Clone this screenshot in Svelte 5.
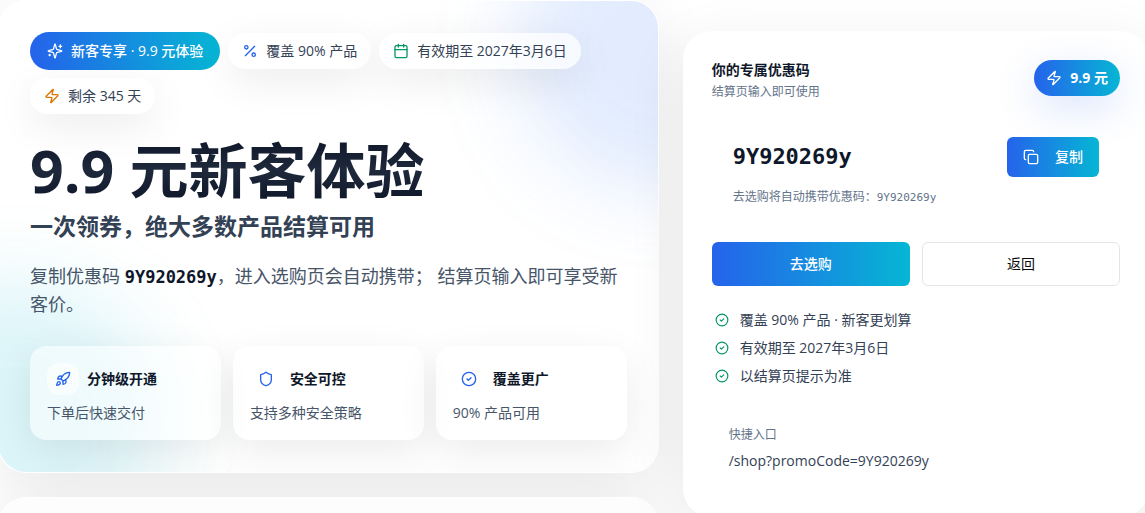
<script>
  const code = "9Y920269y";
  const expires = "2027年3月6日";

  const icons = {
    sparkles: [
      "M9.9 15.5A2 2 0 0 0 8.5 14.1l-6.1-1.6a.5.5 0 0 1 0-1L8.5 9.9A2 2 0 0 0 9.9 8.5l1.6-6.1a.5.5 0 0 1 1 0L14.1 8.5a2 2 0 0 0 1.4 1.4l6.1 1.6a.5.5 0 0 1 0 1l-6.1 1.6a2 2 0 0 0-1.4 1.4l-1.6 6.1a.5.5 0 0 1-1 0z",
      "M20 3v4M22 5h-4M4 17v2M5 18H3",
    ],
    percent: [
      "M19 5 5 19",
      "M9 6.5a2.5 2.5 0 1 1-5 0 2.5 2.5 0 0 1 5 0Z",
      "M20 17.5a2.5 2.5 0 1 1-5 0 2.5 2.5 0 0 1 5 0Z",
    ],
    calendar: [
      "M8 2v4M16 2v4M3 10h18",
      "M5 4h14a2 2 0 0 1 2 2v14a2 2 0 0 1-2 2H5a2 2 0 0 1-2-2V6a2 2 0 0 1 2-2Z",
    ],
    zap: [
      "M4 14a1 1 0 0 1-.78-1.63l9.9-10.2a.5.5 0 0 1 .86.46l-1.92 6.02A1 1 0 0 0 13 10h7a1 1 0 0 1 .78 1.63l-9.9 10.2a.5.5 0 0 1-.86-.46l1.92-6.02A1 1 0 0 0 11 14z",
    ],
    rocket: [
      "M4.5 16.5c-1.5 1.26-2 5-2 5s3.74-.5 5-2c.71-.84.7-2.13-.09-2.91a2.18 2.18 0 0 0-2.91-.09z",
      "m12 15-3-3a22 22 0 0 1 2-3.95A12.88 12.88 0 0 1 22 2c0 2.72-.78 7.5-6 11a22.35 22.35 0 0 1-4 2z",
      "M9 12H4s.55-3.03 2-4c1.62-1.08 5 0 5 0",
      "M12 15v5s3.03-.55 4-2c1.08-1.62 0-5 0-5",
    ],
    shield: [
      "M20 13c0 5-3.5 7.5-7.66 8.95a1 1 0 0 1-.67-.01C7.5 20.5 4 18 4 13V6a1 1 0 0 1 1-1c2 0 4.5-1.2 6.24-2.72a1.17 1.17 0 0 1 1.52 0C14.51 3.81 17 5 19 5a1 1 0 0 1 1 1z",
    ],
    check: ["M22 12a10 10 0 1 1-20 0 10 10 0 0 1 20 0Z", "m9 12 2 2 4-4"],
    copy: [
      "M10 8h10a2 2 0 0 1 2 2v10a2 2 0 0 1-2 2H10a2 2 0 0 1-2-2V10a2 2 0 0 1 2-2Z",
      "M4 16c-1.1 0-2-.9-2-2V4c0-1.1.9-2 2-2h10c1.1 0 2 .9 2 2",
    ],
  };

  const tags = [
    { icon: "percent", tone: "blue", text: "覆盖 90% 产品" },
    { icon: "calendar", tone: "green", text: `有效期至 ${expires}` },
    { icon: "zap", tone: "amber", text: "剩余 345 天" },
  ];

  const features = [
    { icon: "rocket", title: "分钟级开通", text: "下单后快速交付" },
    { icon: "shield", title: "安全可控", text: "支持多种安全策略" },
    { icon: "check", title: "覆盖更广", text: "90% 产品可用" },
  ];

  const notes = [
    "覆盖 90% 产品 · 新客更划算",
    `有效期至 ${expires}`,
    "以结算页提示为准",
  ];

  const copyCode = () => {
    navigator.clipboard?.writeText(code);
  };

  const goBack = () => {
    history.back();
  };
</script>

{#snippet icon(name)}
  <svg class="icon" viewBox="0 0 24 24" aria-hidden="true">
    {#each icons[name] as d}
      <path {d} />
    {/each}
  </svg>
{/snippet}

<div class="page">
  <main>
    <div class="left">
      <section class="card hero">
        <div class="tags">
          <span class="tag primary">{@render icon("sparkles")}新客专享 · 9.9 元体验</span>
          {#each tags as tag}
            <span class="tag {tag.tone}">{@render icon(tag.icon)}{tag.text}</span>
          {/each}
        </div>

        <h1>9.9 元新客体验</h1>
        <h2>一次领券，绝大多数产品结算可用</h2>
        <p class="intro">
          复制优惠码 <b class="mono">{code}</b>，进入选购页会自动携带； 结算页输入即可享受新客价。
        </p>

        <div class="features">
          {#each features as feature}
            <div class="feature">
              <div class="feature-head">
                <span class="feature-icon">{@render icon(feature.icon)}</span>
                <h3>{feature.title}</h3>
              </div>
              <p>{feature.text}</p>
            </div>
          {/each}
        </div>
      </section>

      <section class="card more"></section>
    </div>

    <aside class="card coupon">
      <header>
        <div>
          <h3>你的专属优惠码</h3>
          <p class="small">结算页输入即可使用</p>
        </div>
        <span class="price">{@render icon("zap")}9.9 元</span>
      </header>

      <div class="code-box">
        <div class="code-row">
          <span class="code mono">{code}</span>
          <button class="copy" on:click={copyCode}>{@render icon("copy")}复制</button>
        </div>
        <p class="small">去选购将自动携带优惠码：<span class="mono hint">{code}</span></p>
      </div>

      <div class="actions">
        <a class="buy" href="/shop?promoCode={code}">去选购</a>
        <button class="back" on:click={goBack}>返回</button>
      </div>

      <ul>
        {#each notes as note}
          <li><span class="note-icon">{@render icon("check")}</span>{note}</li>
        {/each}
      </ul>

      <div class="quick">
        <p class="small">快捷入口</p>
        <a href="/shop?promoCode={code}">/shop?promoCode={code}</a>
      </div>
    </aside>
  </main>
</div>

<style>
  :global(body) {
    background: #fff;
  }

  .page {
    height: 100vh;
    overflow: hidden;
    color: #0f172a;
    font-family: "Open Sans", "Noto Sans CJK SC", sans-serif;
    font-size: 14px;
    line-height: 20px;
  }

  main {
    display: grid;
    grid-template-columns: 17fr 12fr;
    align-items: start;
    gap: 24px;
    margin: 0 -4px 0 -2px;
  }

  h1,
  h2,
  h3,
  p,
  ul {
    margin: 0;
    padding: 0;
  }

  h3 {
    font-size: 14px;
    font-weight: 700;
  }

  a {
    color: inherit;
    text-decoration: none;
  }

  button {
    border: 0;
    font: inherit;
    cursor: pointer;
  }

  .mono {
    font-family: "DejaVu Sans Mono", monospace;
    line-height: 1;
  }

  .icon {
    width: 16px;
    height: 16px;
    flex: none;
    fill: none;
    stroke: currentColor;
    stroke-width: 2;
    stroke-linecap: round;
    stroke-linejoin: round;
  }

  .card {
    position: relative;
    box-sizing: border-box;
    border: 1px solid rgba(255, 255, 255, 0.7);
    border-radius: 28px;
    background: rgba(255, 255, 255, 0.92);
    box-shadow: 0 16px 60px rgba(0, 0, 0, 0.09);
  }

  .left {
    display: grid;
    gap: 24px;
  }

  .hero {
    overflow: hidden;
    padding: 31px 31px 32px;
  }

  .hero::before,
  .hero::after {
    content: "";
    position: absolute;
    width: 288px;
    height: 288px;
    border-radius: 50%;
    filter: blur(40px);
  }

  .hero::before {
    top: -96px;
    right: -144px;
    background: rgba(59, 130, 246, 0.15);
  }

  .hero::after {
    bottom: -96px;
    left: -128px;
    background: rgba(6, 182, 212, 0.14);
  }

  .hero > * {
    position: relative;
    z-index: 1;
  }

  .more {
    height: 200px;
    background: #fdfdfd;
  }

  .tags {
    display: flex;
    flex-wrap: wrap;
    align-items: center;
    gap: 8px;
  }

  .tag {
    display: flex;
    align-items: center;
    gap: 8px;
    padding: 8px 14px;
    border-radius: 20px;
    background: rgba(255, 255, 255, 0.7);
    box-shadow: 0 12px 40px rgba(0, 0, 0, 0.08);
    color: #334155;
  }

  .tag.primary {
    padding: 9px 17px;
    background: linear-gradient(90deg, #2563eb, #06b6d4);
    box-shadow: none;
    color: #fff;
    font-weight: 500;
  }

  .blue .icon {
    color: #2563eb;
  }

  .green .icon {
    color: #059669;
  }

  .amber .icon {
    color: #d97706;
  }

  h1 {
    margin-top: 24px;
    background: linear-gradient(#0f172a, #1e293b 50%, #0f172a);
    background-clip: text;
    color: transparent;
    font-size: 59px;
    font-weight: 700;
    line-height: 64px;
  }

  h2 {
    margin-top: 8px;
    color: #334155;
    font-size: 23px;
    font-weight: 700;
    line-height: 32px;
  }

  .intro {
    margin-top: 20px;
    color: #475569;
    font-size: 18px;
    line-height: 28px;
  }

  .intro .mono {
    color: #0f172a;
    font-size: 17px;
  }

  .features {
    display: grid;
    grid-template-columns: repeat(3, 1fr);
    gap: 12px;
    margin-top: 28px;
  }

  .feature {
    padding: 17px;
    border-radius: 16px;
    background: rgba(255, 255, 255, 0.5);
    box-shadow: 0 12px 40px rgba(0, 0, 0, 0.08);
    color: #475569;
  }

  .feature-head {
    display: flex;
    align-items: center;
    gap: 8px;
    margin-bottom: 8px;
    color: #0f172a;
  }

  .feature-icon {
    display: grid;
    place-items: center;
    width: 32px;
    height: 32px;
    border-radius: 12px;
    background: rgba(255, 255, 255, 0.6);
    color: #2563eb;
  }

  .coupon {
    margin-top: 31px;
    padding: 28px;
    background: #fff;
  }

  header {
    display: flex;
    align-items: flex-start;
    justify-content: space-between;
  }

  .small {
    color: #64748b;
    font-size: 12px;
    line-height: 16px;
  }

  header .small {
    margin-top: 4px;
  }

  .price {
    display: flex;
    align-items: center;
    gap: 8px;
    padding: 8px 12px;
    border-radius: 18px;
    background: linear-gradient(90deg, #2563eb, #06b6d4);
    box-shadow: 0 12px 40px rgba(37, 99, 235, 0.18);
    color: #fff;
    font-weight: 700;
  }

  .code-box {
    margin-top: 20px;
    padding: 17px 21px;
    border-radius: 20px;
    background: rgba(255, 255, 255, 0.8);
  }

  .code-row {
    display: flex;
    align-items: center;
    justify-content: space-between;
    margin-bottom: 12px;
  }

  .code {
    font-size: 22px;
    font-weight: 700;
  }

  .hint {
    font-size: 11px;
  }

  .copy {
    display: flex;
    align-items: center;
    gap: 16px;
    height: 40px;
    padding: 0 16px;
    border-radius: 6px;
    background: linear-gradient(90deg, #2563eb, #06b6d4);
    color: #fff;
    font-weight: 500;
  }

  .actions {
    display: grid;
    grid-template-columns: 1fr 1fr;
    gap: 12px;
    margin-top: 20px;
    text-align: center;
  }

  .buy,
  .back {
    box-sizing: border-box;
    height: 44px;
    padding: 12px;
    border-radius: 6px;
  }

  .buy {
    background: linear-gradient(90deg, #2563eb, #06b6d4);
    color: #fff;
    font-weight: 500;
  }

  .back {
    padding: 11px;
    border: 1px solid #e5e5e5;
    background: #fff;
    color: #0a0a0a;
  }

  ul {
    display: grid;
    gap: 8px;
    margin-top: 24px;
    color: #334155;
    list-style: none;
  }

  li {
    display: flex;
    gap: 8px;
  }

  .note-icon {
    display: grid;
    place-items: center;
    width: 20px;
    color: #059669;
  }

  .note-icon .icon {
    width: 14px;
    height: 14px;
  }

  .quick {
    display: grid;
    gap: 8px;
    margin-top: 24px;
    padding: 17px;
    color: #334155;
  }
</style>
